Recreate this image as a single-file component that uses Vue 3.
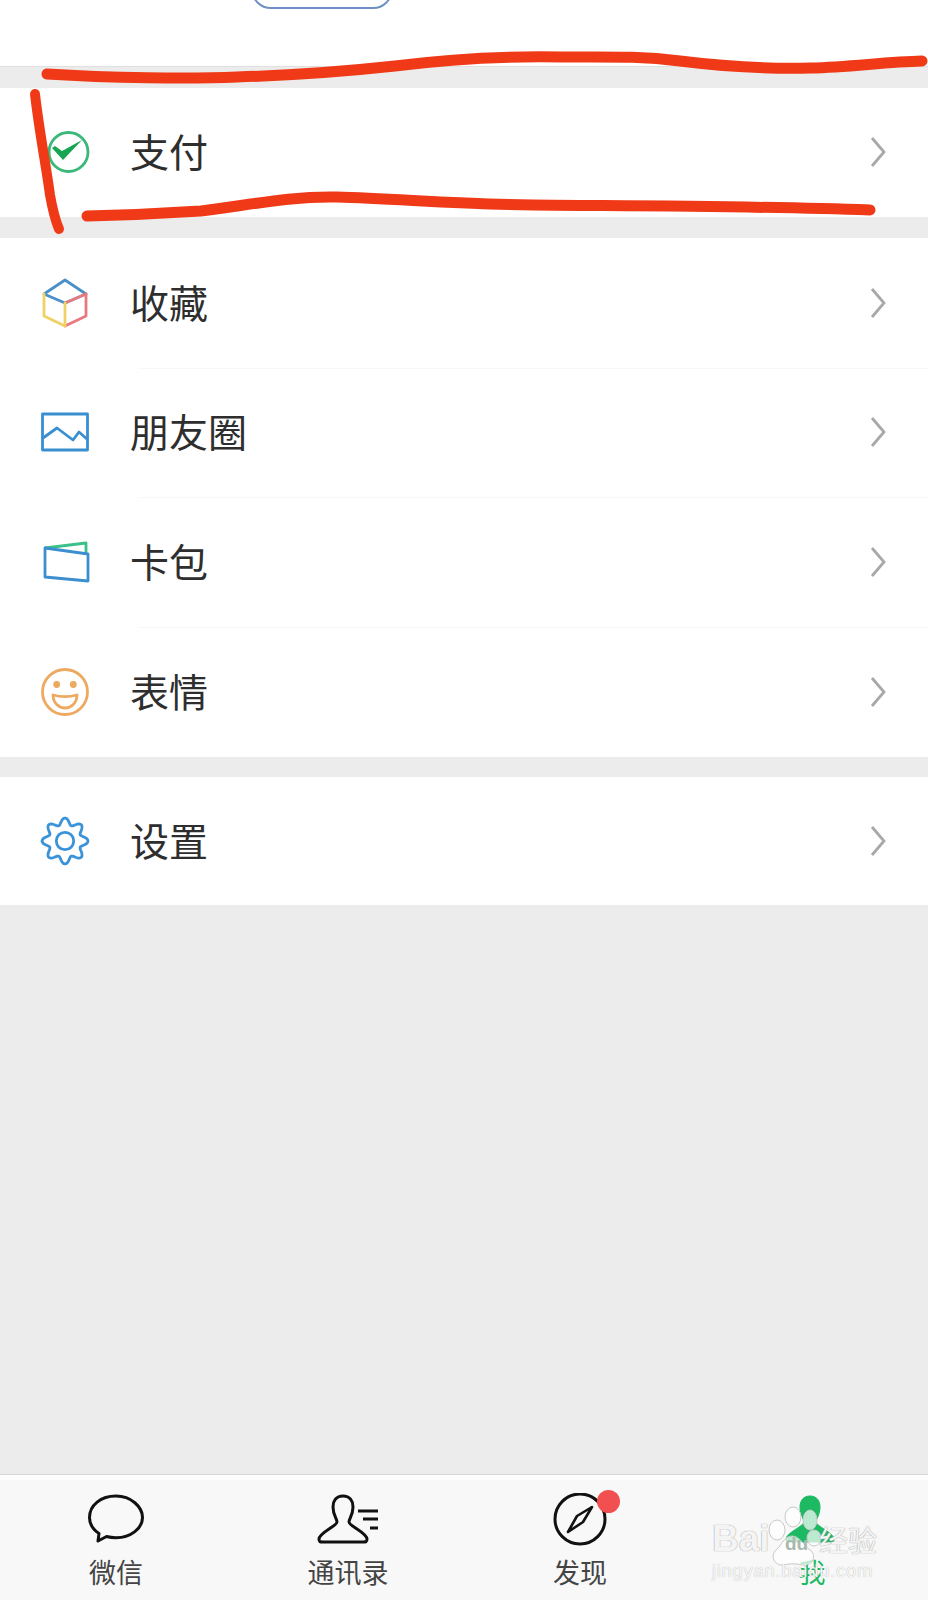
<script setup>
const groups = [
  [{ key: 'pay', label: '支付' }],
  [
    { key: 'fav', label: '收藏' },
    { key: 'moments', label: '朋友圈' },
    { key: 'cards', label: '卡包' },
    { key: 'smile', label: '表情' }
  ],
  [{ key: 'gear', label: '设置' }]
]

const tabs = [
  { key: 'chat', label: '微信' },
  { key: 'contacts', label: '通讯录' },
  { key: 'discover', label: '发现' },
  { key: 'me', label: '我' }
]

const contactPath = 'M27 3C20 3 17 8 17 14C17 22 21 26 21 29C21 33 3 40 3 46C3 49 4 49 7 49L47 49C50 49 51 49 51 46C51 40 33 33 33 29C33 26 37 22 37 14C37 8 34 3 27 3Z'

// wavy outline for the settings gear, 8 teeth
let gearPath = ''
for (let i = 0; i < 120; i++) {
  const a = (i / 120) * Math.PI * 2
  const r = 19.7 + 3.3 * Math.cos(8 * a)
  gearPath += (i ? 'L' : 'M') + (24 + r * Math.sin(a)).toFixed(2) + ' ' + (24 - r * Math.cos(a)).toFixed(2)
}
gearPath += 'Z'
</script>

<template>
  <main class="page">
    <section class="profile">
      <div class="status-btn"></div>
    </section>

    <section v-for="(group, i) in groups" :key="i" class="group">
      <div v-for="item in group" :key="item.key" class="row">
        <div class="icon">
          <svg v-if="item.key === 'pay'" width="48" height="48" viewBox="0 0 48 48" fill="none">
            <circle cx="27.500" cy="24" r="19.500" stroke="#3cb878" stroke-width="2.800" />
            <path d="M11 20l3-2 7 5 20-11-19 20z" fill="#16a653" />
          </svg>
          <svg v-else-if="item.key === 'fav'" width="48" height="48" viewBox="0 0 48 48" fill="none" stroke-width="2.800" stroke-linejoin="round" stroke-linecap="round">
            <path d="M3 15L24 1L45 15L24 24Z" stroke="#4a90c8" />
            <path d="M45 15V37L24 47" stroke="#e8797e" />
            <path d="M24 24L45 15" stroke="#e8797e" />
            <path d="M3 15V37L24 47V24" stroke="#f0d264" />
          </svg>
          <svg v-else-if="item.key === 'moments'" width="48" height="48" viewBox="0 0 48 48" fill="none" stroke="#3a8fd0" stroke-width="2.800" stroke-linejoin="round">
            <rect x="1.500" y="6" width="45" height="36" />
            <path d="M2 30L16 20L32 32L38 24L47 32" />
          </svg>
          <svg v-else-if="item.key === 'cards'" width="48" height="48" viewBox="0 0 48 48" fill="none" stroke-width="2.800" stroke-linejoin="round">
            <path d="M4 10L45 5V15" stroke="#3cc08a" />
            <path d="M4 10L47 16V43L4 39Z" stroke="#3b8fcf" />
          </svg>
          <svg v-else-if="item.key === 'smile'" width="48" height="48" viewBox="0 0 48 48" fill="none" stroke="#eda95f" stroke-width="2.800" stroke-linejoin="round">
            <circle cx="24" cy="24" r="22.500" />
            <circle cx="15.700" cy="16.500" r="3.400" fill="#eda95f" stroke="none" />
            <circle cx="32.300" cy="16.500" r="3.400" fill="#eda95f" stroke="none" />
            <path d="M12 27C19 29 29 29 36 27C36 35 30 40 24 40C18 40 12 35 12 27Z" />
          </svg>
          <svg v-else width="48" height="48" viewBox="0 0 48 48" fill="none" stroke="#3a93d8" stroke-width="2.800">
            <path :d="gearPath" stroke-linejoin="round" />
            <circle cx="24" cy="24" r="8.700" />
          </svg>
        </div>
        <span class="label">{{ item.label }}</span>
        <svg class="chevron" width="16" height="32" viewBox="0 0 16 32" fill="none">
          <path d="M2 2L14 16L2 30" stroke="#a8a8a8" stroke-width="2.800" />
        </svg>
      </div>
    </section>

    <div class="spacer"></div>

    <nav class="tabbar">
      <div v-for="tab in tabs" :key="tab.key" class="tab" :class="{ active: tab.key === 'me' }">
        <svg width="64" height="54" viewBox="0 0 64 54" fill="none" stroke="#111" stroke-width="3">
          <path v-if="tab.key === 'chat'" d="M32 3C17 3 5.500 12 5.500 24.500c0 6.500 3.500 12 9.500 16l-1 7.500 8.500-4.500c3 .8 6.300 1.200 9.500 1.200 15 0 26.500-9.500 26.500-20.200S47 3 32 3z" stroke-linejoin="round" />
          <template v-else-if="tab.key === 'contacts'">
            <path :d="contactPath" stroke-linejoin="round" />
            <path d="M42 18H62M47 26H62M54 35H62" />
          </template>
          <template v-else-if="tab.key === 'discover'">
            <circle cx="32" cy="26" r="25" />
            <path d="M44 14L29 23L20 39L35 29Z" stroke-width="2.600" stroke-linejoin="round" />
          </template>
          <path v-else :d="contactPath" fill="#1db963" stroke="#1db963" stroke-width="1" transform="translate(3 0)" />
        </svg>
        <span class="tab-label">{{ tab.label }}</span>
        <i v-if="tab.key === 'discover'" class="dot"></i>
      </div>
    </nav>

    <!-- marker scribbles drawn over the screenshot -->
    <svg class="scribble" width="928" height="260" viewBox="0 0 928 260" fill="none" stroke="#f03a17" stroke-linecap="round">
      <path d="M47 74C110 78 190 79 237 77C300 75 340 72 395 66C450 59 510 56 562 57C610 57 640 56 680 61C720 66 770 69 811 68C850 67 885 62 922 61" stroke-width="11" />
      <path d="M35 94C39 130 46 165 50 195C53 212 56 222 59 229" stroke-width="10" />
      <path d="M87 216C130 215 170 213 201 211C250 205 290 196 337 197C400 199 460 204 533 205C640 206 760 206 870 210" stroke-width="11" />
    </svg>

    <!-- image host watermark -->
    <div class="watermark">
      <svg class="paw" width="64" height="62" viewBox="0 0 64 62" fill="#fff" fill-opacity=".7" stroke="#c8c8c8" stroke-width="1">
        <ellipse cx="10" cy="24" rx="8" ry="10" />
        <ellipse cx="26" cy="11" rx="8" ry="10" />
        <ellipse cx="43" cy="14" rx="7" ry="10" />
        <ellipse cx="47" cy="32" rx="7" ry="8" />
        <path d="M25 30C33 30 37 40 43 44C50 49 46 60 36 59C30 58 24 57 17 59C7 60 3 50 9 44C15 39 17 30 25 30Z" />
      </svg>
      <div class="wm-main"><span class="wm-bai">Bai</span><span class="wm-du">du</span><span class="wm-cn">经验</span></div>
      <div class="wm-sub">jingyan.baidu.com</div>
    </div>
  </main>
</template>

<style scoped>
.page {
  position: relative;
  width: 928px;
  height: 1600px;
  display: flex;
  flex-direction: column;
  overflow: hidden;
  background: #ececec;
  font-family: "Noto Sans CJK SC", "Liberation Sans", sans-serif;
}

.profile {
  height: 67px;
  flex-shrink: 0;
  overflow: hidden;
  background: #fff;
  border-bottom: 1px solid #e0e0e0;
  box-sizing: border-box;
}

.status-btn {
  width: 142px;
  height: 50px;
  margin: -41px 0 0 251px;
  box-sizing: border-box;
  border: 2.500px solid #6f90c4;
  border-radius: 20px;
}

.group {
  flex-shrink: 0;
  margin-top: 20.500px;
  background: #fff;
}

.row {
  height: 129.750px;
  display: flex;
  align-items: center;
  padding: 0 42px 0 41px;
  position: relative;
}

.group:first-of-type .row {
  height: 126.500px;
}

.group:last-of-type .row {
  height: 128px;
}

.row + .row::before {
  content: "";
  position: absolute;
  top: 0;
  left: 138px;
  right: 0;
  height: 1px;
  background: #f8f8f8;
}

.icon {
  width: 48px;
  height: 48px;
  flex-shrink: 0;
  margin-right: 41px;
}

.icon svg {
  display: block;
  overflow: visible;
}

.label {
  flex: 1;
  margin-bottom: 4px;
  font-size: 39px;
  line-height: 48px;
  color: #2e2e2e;
}

.chevron {
  flex-shrink: 0;
}

.spacer {
  flex: 1;
}

.tabbar {
  height: 126px;
  flex-shrink: 0;
  box-sizing: border-box;
  display: grid;
  grid-template-columns: repeat(4, 1fr);
  background: #f8f8f8;
  border-top: 1px solid #d6d6d6;
  box-shadow: inset 0 5px 0 #fdfdfd;
}

.tab {
  position: relative;
  display: flex;
  flex-direction: column;
  align-items: center;
  padding-top: 18px;
}

.tab svg {
  display: block;
}

.tab-label {
  margin-top: 9px;
  font-size: 27px;
  line-height: 32px;
  color: #444;
}

.tab.active .tab-label {
  color: #1db963;
}

.dot {
  position: absolute;
  top: 15px;
  left: 133px;
  width: 23px;
  height: 23px;
  border-radius: 50%;
  background: #f25050;
}

.scribble {
  position: absolute;
  top: 0;
  left: 0;
  pointer-events: none;
}

.watermark {
  position: absolute;
  left: 712px;
  top: 1505px;
  width: 170px;
  height: 78px;
  color: rgba(255, 255, 255, 0.88);
  font-family: "Liberation Sans", "Noto Sans CJK SC", sans-serif;
}

.paw {
  position: absolute;
  left: 55px;
  top: 1px;
}

.wm-main {
  position: absolute;
  left: 0;
  top: 16px;
  display: flex;
  align-items: center;
  height: 36px;
  white-space: nowrap;
  text-shadow: 0 0 1px #a8a8a8, 0 0 1px #a8a8a8;
}

.wm-bai {
  width: 62px;
  font-size: 37px;
  font-weight: 700;
  line-height: 36px;
}

.wm-du {
  width: 45px;
  font-size: 19px;
  font-weight: 700;
  text-align: center;
  padding-top: 10px;
  color: #a9b8ae;
  text-shadow: none;
}

.wm-cn {
  font-family: "Noto Sans CJK SC", sans-serif;
  font-size: 29px;
  line-height: 36px;
}

.wm-sub {
  position: absolute;
  left: 0;
  top: 54px;
  font-size: 18.500px;
  line-height: 24px;
  white-space: nowrap;
  text-shadow: 0 0 1px #a8a8a8;
  letter-spacing: 0.700px;
}
</style>
